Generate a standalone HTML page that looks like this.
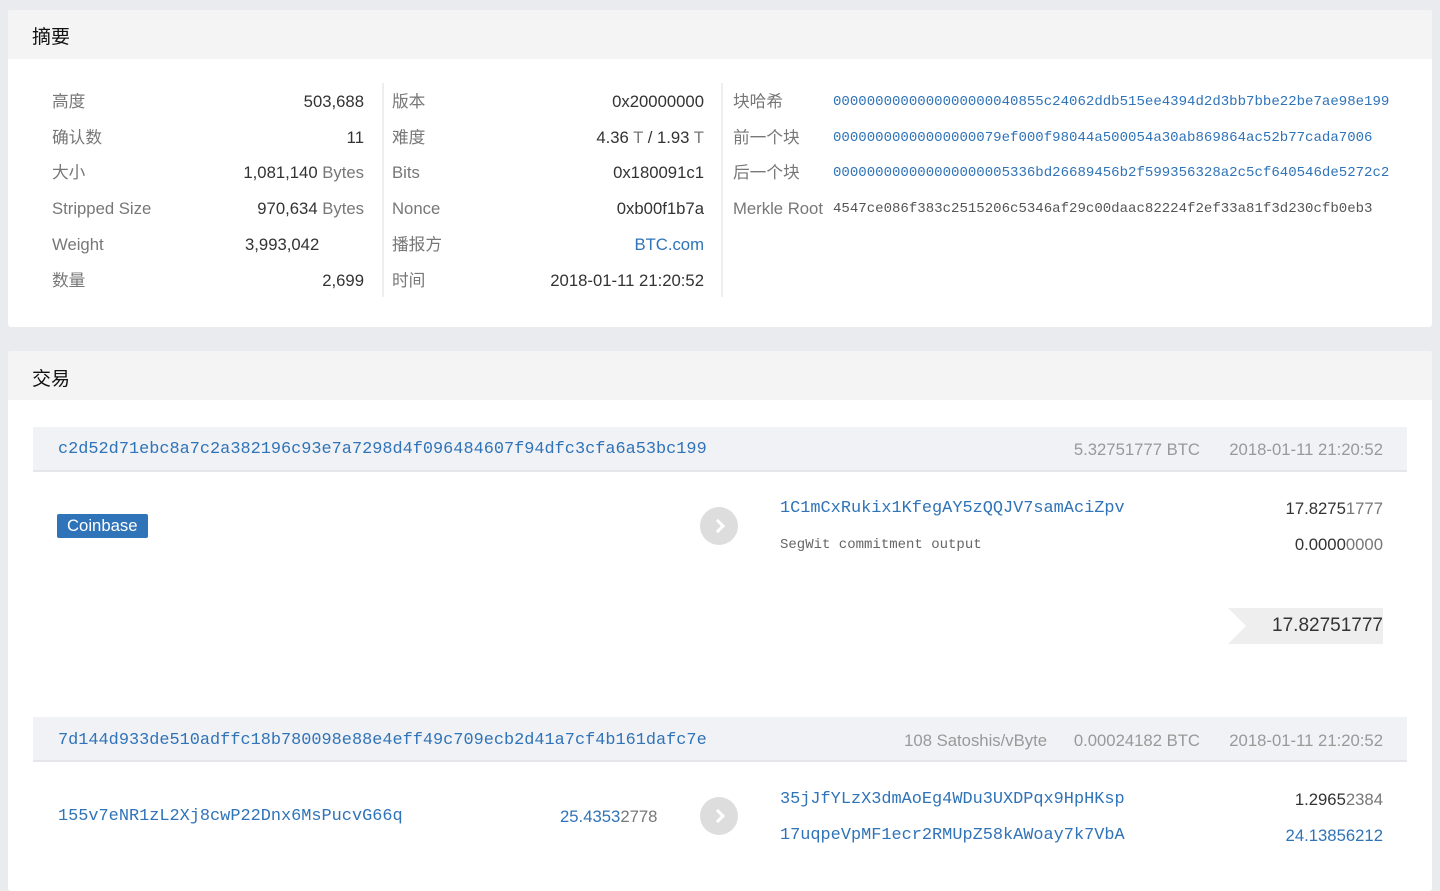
<!DOCTYPE html>
<html><head><meta charset="utf-8"><style>
*{margin:0;padding:0;box-sizing:border-box}
body{width:1440px;height:881px;overflow:hidden;background:#e9ebee;font-family:"Liberation Sans","Noto Sans CJK SC",sans-serif;font-size:16.7px;color:#333;position:relative}
.card{position:absolute;left:8px;width:1424px;background:#fff;border-radius:3px;overflow:hidden}
.hd{height:49px;background:#f4f4f4;font-size:19px;color:#111;padding:13px 0 0 24px}
.a{position:absolute;white-space:nowrap;line-height:20px}
.l{color:#777}
.r{text-align:right}
.m{font-family:"Liberation Mono",monospace;color:#2f73b8}
.blue{color:#2f73b8}
.lt{color:#999}
.div{position:absolute;width:2px;background:#eee}
.trow{position:absolute;left:33px;width:1374px;height:45px;background:#f1f2f5;border-bottom:2px solid #e4e6ea}
.arrow{position:absolute;width:38px;height:38px;border-radius:50%;background:#ddd}
.arrow:after{content:"";position:absolute;left:13px;top:14px;width:7px;height:7px;border-top:3px solid #fff;border-right:3px solid #fff;transform:rotate(45deg)}
</style></head><body>
<div class="card" style="top:10px;height:317px"><div class="hd" style="padding-top:12px">摘要</div></div>
<div class="div" style="left:382px;top:83px;height:214px"></div>
<div class="div" style="left:721px;top:83px;height:214px"></div>

<div class="a l" style="left:52px;top:92px">高度</div><div class="a r" style="right:1076px;top:92px">503,688</div>
<div class="a l" style="left:52px;top:128px">确认数</div><div class="a r" style="right:1076px;top:128px">11</div>
<div class="a l" style="left:52px;top:163px">大小</div><div class="a r" style="right:1076px;top:163px">1,081,140 <span class="l">Bytes</span></div>
<div class="a l" style="left:52px;top:199px">Stripped Size</div><div class="a r" style="right:1076px;top:199px">970,634 <span class="l">Bytes</span></div>
<div class="a l" style="left:52px;top:235px">Weight</div><div class="a" style="left:245px;top:235px">3,993,042</div>
<div class="a l" style="left:52px;top:271px">数量</div><div class="a r" style="right:1076px;top:271px">2,699</div>

<div class="a l" style="left:392px;top:92px">版本</div><div class="a r" style="right:736px;top:92px">0x20000000</div>
<div class="a l" style="left:392px;top:128px">难度</div><div class="a r" style="right:736px;top:128px">4.36 <span class="l">T</span> / 1.93 <span class="l">T</span></div>
<div class="a l" style="left:392px;top:163px">Bits</div><div class="a r" style="right:736px;top:163px">0x180091c1</div>
<div class="a l" style="left:392px;top:199px">Nonce</div><div class="a r" style="right:736px;top:199px">0xb00f1b7a</div>
<div class="a l" style="left:392px;top:235px">播报方</div><div class="a r blue" style="right:736px;top:235px">BTC.com</div>
<div class="a l" style="left:392px;top:271px">时间</div><div class="a r" style="right:736px;top:271px">2018-01-11 21:20:52</div>

<div class="a l" style="left:733px;top:92px">块哈希</div><div class="a m" style="left:833px;top:92px;font-size:14.05px">0000000000000000000040855c24062ddb515ee4394d2d3bb7bbe22be7ae98e199</div>
<div class="a l" style="left:733px;top:128px">前一个块</div><div class="a m" style="left:833px;top:128px;font-size:14.05px">00000000000000000079ef000f98044a500054a30ab869864ac52b77cada7006</div>
<div class="a l" style="left:733px;top:163px">后一个块</div><div class="a m" style="left:833px;top:163px;font-size:14.05px">000000000000000000005336bd26689456b2f599356328a2c5cf640546de5272c2</div>
<div class="a l" style="left:733px;top:199px">Merkle Root</div><div class="a m" style="left:833px;top:199px;font-size:14.05px;color:#555">4547ce086f383c2515206c5346af29c00daac82224f2ef33a81f3d230cfb0eb3</div>

<div class="card" style="top:351px;height:540px"><div class="hd">交易</div></div>

<div class="trow" style="top:427px"></div>
<div class="a m" style="left:58px;top:440px;font-size:16.9px">c2d52d71ebc8a7c2a382196c93e7a7298d4f096484607f94dfc3cfa6a53bc199</div>
<div class="a lt" style="right:240px;top:440px">5.32751777 BTC</div>
<div class="a lt" style="right:57px;top:440px">2018-01-11 21:20:52</div>
<div class="a" style="left:57px;top:514px;height:24px;background:#2f73b8;color:#fff;border-radius:2px;padding:2px 10px;line-height:20px">Coinbase</div>
<div class="arrow" style="left:700px;top:507px"></div>
<div class="a m" style="left:780px;top:499px;font-size:16.9px">1C1mCxRukix1KfegAY5zQQJV7samAciZpv</div>
<div class="a r" style="right:57px;top:499px">17.8275<span class="l">1777</span></div>
<div class="a m" style="left:780px;top:535px;font-size:14px;color:#666">SegWit commitment output</div>
<div class="a r" style="right:57px;top:535px">0.0000<span class="l">0000</span></div>
<div class="a" style="left:1228px;top:608px;width:155px;height:36px;background:#eee;clip-path:polygon(0 0,100% 0,100% 100%,0 100%,18px 50%)"></div>
<div class="a r" style="right:57px;top:616px;font-size:19px">17.82751777</div>

<div class="trow" style="top:717px"></div>
<div class="a m" style="left:58px;top:731px;font-size:16.9px">7d144d933de510adffc18b780098e88e4eff49c709ecb2d41a7cf4b161dafc7e</div>
<div class="a lt" style="right:393px;top:731px">108 Satoshis/vByte</div>
<div class="a lt" style="right:240px;top:731px">0.00024182 BTC</div>
<div class="a lt" style="right:57px;top:731px">2018-01-11 21:20:52</div>
<div class="a m" style="left:58px;top:807px;font-size:16.9px">155v7eNR1zL2Xj8cwP22Dnx6MsPucvG66q</div>
<div class="a blue" style="left:560px;top:807px">25.4353<span class="l">2778</span></div>
<div class="arrow" style="left:700px;top:797px"></div>
<div class="a m" style="left:780px;top:790px;font-size:16.9px">35jJfYLzX3dmAoEg4WDu3UXDPqx9HpHKsp</div>
<div class="a r" style="right:57px;top:790px">1.2965<span class="l">2384</span></div>
<div class="a m" style="left:780px;top:826px;font-size:16.9px">17uqpeVpMF1ecr2RMUpZ58kAWoay7k7VbA</div>
<div class="a r blue" style="right:57px;top:826px">24.13856212</div>
</body></html>
